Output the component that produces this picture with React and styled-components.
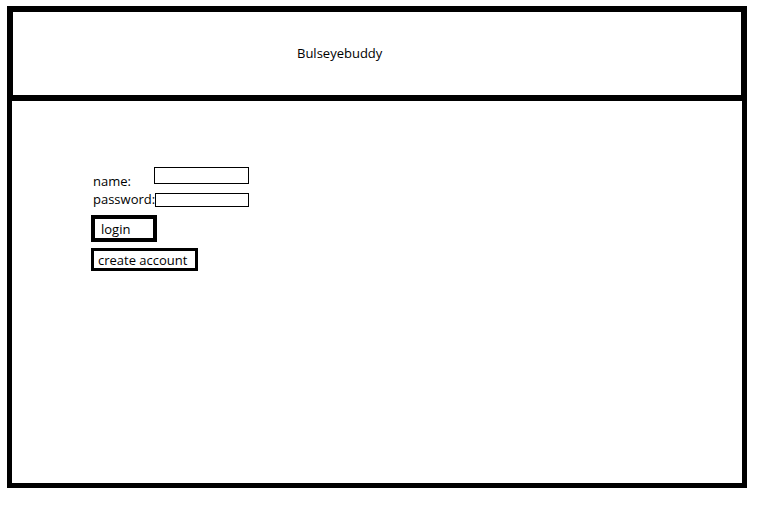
import React, { useState } from 'react';
import styled, { createGlobalStyle } from 'styled-components';

const GlobalStyle = createGlobalStyle`
  html, body {
    margin: 0;
    padding: 0;
    background: #fff;
  }
  body {
    font-family: "Open Sans", "Noto Sans", sans-serif;
    color: #000;
  }
`;

const Frame = styled.div`
  margin: 6px 0 0 7px;
  width: 740px;
`;

const Header = styled.header`
  box-sizing: border-box;
  height: 95px;
  border: 6px solid #000;
  display: flex;
  align-items: center;
  padding: 0 0 2px 284px;
`;

const Title = styled.h1`
  margin: 0;
  font-size: 13px;
  font-weight: 400;
  line-height: 16px;
`;

const Body = styled.main`
  box-sizing: border-box;
  height: 387px;
  width: 740px;
  border: 5px solid #000;
  border-top: 0;
  padding: 66px 0 0 79px;
`;

const Form = styled.form`
  display: flex;
  flex-direction: column;
  align-items: flex-start;
`;

const Row = styled.div`
  display: flex;
  align-items: flex-start;
  margin-bottom: ${({ gap }) => gap}px;
`;

const Label = styled.label`
  box-sizing: border-box;
  width: ${({ width }) => (width ? `${width}px` : 'auto')};
  margin-top: ${({ drop }) => drop}px;
  padding-left: 2px;
  font-size: 13px;
  line-height: 16px;
`;

const Field = styled.input`
  box-sizing: border-box;
  width: ${({ width }) => width}px;
  height: ${({ height }) => height}px;
  margin: 0;
  padding: 0 2px;
  border: 1px solid #000;
  border-radius: 0;
  outline: none;
  font: 12px "Open Sans", sans-serif;
  background: #fff;
`;

const Button = styled.button`
  box-sizing: border-box;
  width: ${({ width }) => width}px;
  height: ${({ height }) => height}px;
  margin: 0 0 ${({ gap }) => gap || 0}px 0;
  border: ${({ thick }) => thick}px solid #000;
  border-radius: 0;
  background: #fff;
  color: #000;
  text-align: left;
  padding: 0 0 0 ${({ pad }) => pad}px;
  font-family: "Open Sans", "Noto Sans", sans-serif;
  font-size: 13px;
  line-height: 16px;
  cursor: pointer;
`;

export default function App() {
  const [name, setName] = useState('');
  const [password, setPassword] = useState('');

  return (
    <>
      <GlobalStyle />
      <Frame>
        <Header>
          <Title>Bulseyebuddy</Title>
        </Header>
        <Body>
          <Form onSubmit={(e) => e.preventDefault()}>
            <Row gap={4}>
              <Label width={63} drop={6} htmlFor="name">name:</Label>
              <Field
                id="name"
                width={95}
                height={17}
                value={name}
                onChange={(e) => setName(e.target.value)}
              />
            </Row>
            <Row gap={8}>
              <Label drop={-2} htmlFor="password">password:</Label>
              <Field
                id="password"
                type="password"
                width={94}
                height={14}
                value={password}
                onChange={(e) => setPassword(e.target.value)}
              />
            </Row>
            <Button type="submit" width={66} height={27} thick={4} pad={6} gap={6}>
              login
            </Button>
            <Button type="button" width={107} height={23} thick={3} pad={4}>
              create account
            </Button>
          </Form>
        </Body>
      </Frame>
    </>
  );
}
